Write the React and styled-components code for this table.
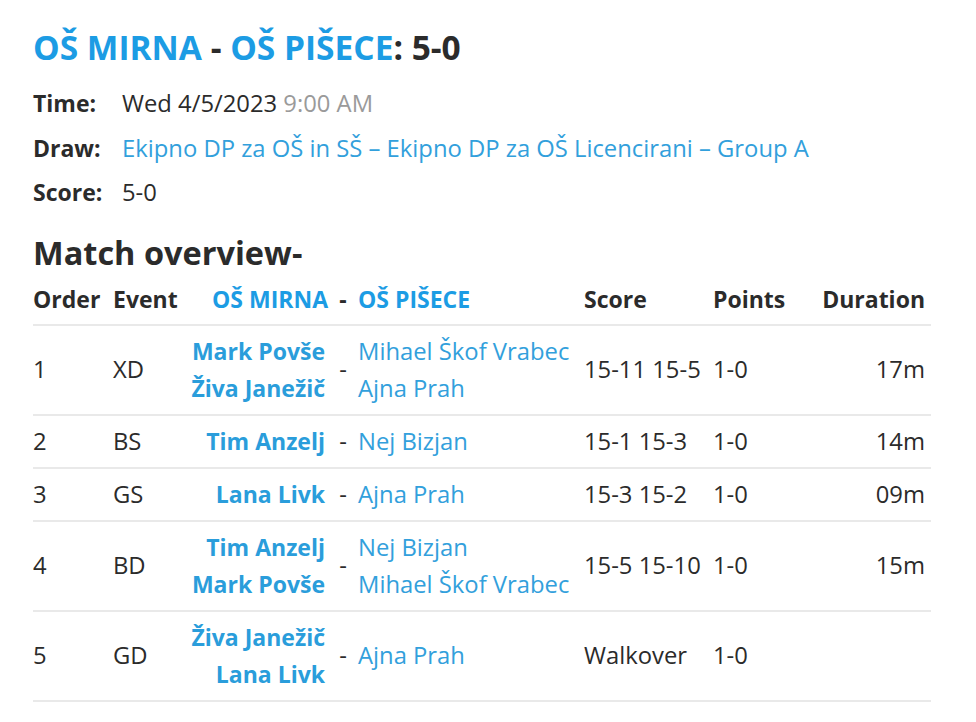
import React from 'react';
import styled, { createGlobalStyle } from 'styled-components';

const GlobalStyle = createGlobalStyle`
  html, body {
    margin: 0;
    padding: 0;
    background: #ffffff;
  }

  body {
    font-family: "Open Sans", "Noto Sans", sans-serif;
    color: #2b2b2b;
  }
`;

const Page = styled.div`
  padding: 27px 45px 0 33px;
`;

const Title = styled.h1`
  margin: 0 0 14px;
  font-size: 33.5px;
  line-height: 40px;
  font-weight: 700;
  color: #2b2b2b;
`;

const Team = styled.span`
  color: #1c9ce4;
`;

const InfoList = styled.div`
  display: flex;
  flex-direction: column;
`;

const InfoRow = styled.div`
  display: flex;
  font-size: 23.8px;
  line-height: 44.5px;
`;

const InfoLabel = styled.span`
  width: 89px;
  font-weight: 700;
  font-size: 23px;
`;

const InfoValue = styled.span`
  color: ${({ $link }) => ($link ? '#32a0dc' : '#2b2b2b')};
`;

const Muted = styled.span`
  color: #9a9a9a;
`;

const SectionTitle = styled.h2`
  margin: 18px 0 0;
  font-size: 32.5px;
  line-height: 40px;
  font-weight: 700;
`;

const Table = styled.div`
  width: 898px;
  font-size: 23.8px;
`;

const Row = styled.div`
  display: grid;
  grid-template-columns: 80px 75px 140px 30px 226px 129px 106px 1fr;
  align-items: center;
  padding: ${({ $head }) => ($head ? '8px 0 6px' : '7px 0')};
  border-bottom: 2px solid #e9e9e9;
  line-height: 37px;
`;

const Cell = styled.div`
  white-space: nowrap;
  font-weight: ${({ $bold }) => ($bold ? 700 : 400)};
  font-size: ${({ $bold }) => ($bold ? '23px' : 'inherit')};
  text-align: ${({ $align }) => $align || 'left'};
  color: #2b2b2b;
  padding-right: ${({ $pr }) => $pr || 0}px;
`;

const TeamHead = styled(Cell)`
  color: #1c9ce4;
`;

const Players = styled.div`
  display: flex;
  flex-direction: column;
  align-items: ${({ $right }) => ($right ? 'flex-end' : 'flex-start')};
  padding-right: ${({ $right }) => ($right ? '3px' : '0')};
  font-weight: ${({ $right }) => ($right ? 700 : 400)};
  font-size: ${({ $right }) => ($right ? '23px' : 'inherit')};
  color: ${({ $right }) => ($right ? '#2a9ddb' : '#32a0dc')};
  white-space: nowrap;
`;

const matches = [
  { order: 1, event: 'XD', home: ['Mark Povše', 'Živa Janežič'], away: ['Mihael Škof Vrabec', 'Ajna Prah'], score: '15-11 15-5', points: '1-0', duration: '17m' },
  { order: 2, event: 'BS', home: ['Tim Anzelj'], away: ['Nej Bizjan'], score: '15-1 15-3', points: '1-0', duration: '14m' },
  { order: 3, event: 'GS', home: ['Lana Livk'], away: ['Ajna Prah'], score: '15-3 15-2', points: '1-0', duration: '09m' },
  { order: 4, event: 'BD', home: ['Tim Anzelj', 'Mark Povše'], away: ['Nej Bizjan', 'Mihael Škof Vrabec'], score: '15-5 15-10', points: '1-0', duration: '15m' },
  { order: 5, event: 'GD', home: ['Živa Janežič', 'Lana Livk'], away: ['Ajna Prah'], score: 'Walkover', points: '1-0', duration: '' },
];

const App = () => (
  <>
    <GlobalStyle />
    <Page>
      <Title>
        <Team>OŠ MIRNA</Team> - <Team>OŠ PIŠECE</Team>: 5-0
      </Title>

      <InfoList>
        <InfoRow>
          <InfoLabel>Time:</InfoLabel>
          <InfoValue>Wed 4/5/2023 <Muted>9:00 AM</Muted></InfoValue>
        </InfoRow>
        <InfoRow>
          <InfoLabel>Draw:</InfoLabel>
          <InfoValue $link>Ekipno DP za OŠ in SŠ – Ekipno DP za OŠ Licencirani – Group A</InfoValue>
        </InfoRow>
        <InfoRow>
          <InfoLabel>Score:</InfoLabel>
          <InfoValue>5-0</InfoValue>
        </InfoRow>
      </InfoList>

      <SectionTitle>Match overview-</SectionTitle>

      <Table>
        <Row $head>
          <Cell $bold>Order</Cell>
          <Cell $bold>Event</Cell>
          <TeamHead $bold $align="right">OŠ MIRNA</TeamHead>
          <Cell $bold $align="center">-</Cell>
          <TeamHead $bold>OŠ PIŠECE</TeamHead>
          <Cell $bold>Score</Cell>
          <Cell $bold>Points</Cell>
          <Cell $bold $align="right" $pr={6}>Duration</Cell>
        </Row>
        {matches.map((m) => (
          <Row key={m.order}>
            <Cell>{m.order}</Cell>
            <Cell>{m.event}</Cell>
            <Players $right>
              {m.home.map((p) => <span key={p}>{p}</span>)}
            </Players>
            <Cell $align="center">-</Cell>
            <Players>
              {m.away.map((p) => <span key={p}>{p}</span>)}
            </Players>
            <Cell>{m.score}</Cell>
            <Cell>{m.points}</Cell>
            <Cell $align="right" $pr={6}>{m.duration}</Cell>
          </Row>
        ))}
      </Table>
    </Page>
  </>
);

export default App;
